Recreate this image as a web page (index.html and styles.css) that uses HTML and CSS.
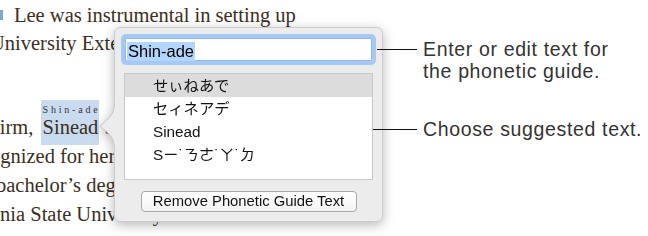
FILE: index.html
```html
<!DOCTYPE html>
<html>
<head>
<meta charset="utf-8">
<link rel="stylesheet" href="styles.css">
</head>
<body>
<div class="page">
  <div class="stage">
    <div class="doc">
      <div class="ln ln1"><span class="mark"></span>Lee was instrumental in setting up</div>
      <div class="ln ln2">University Extension</div>
      <div class="ln ln3">firm, <span class="hl"><span class="rt">Shin-ade</span>Sinead</span> Sheehan</div>
      <div class="ln ln4">recognized for her</div>
      <div class="ln ln5">bachelor’s degree</div>
      <div class="ln ln6">California State University at Chico.</div>
    </div>
    <div class="popover">
      <svg class="tail" width="16" height="38" viewBox="0 0 16 38">
        <path d="M16,0 L14,0 C14,9 5,14 0,19 C5,24 14,29 14,38 L16,38 Z" fill="#ececec"/>
        <path d="M14,0 C14,9 5,14 0,19 C5,24 14,29 14,38" fill="none" stroke="#c6c6c6" stroke-width="1"/>
      </svg>
      <div class="field"><span class="sel">Shin-ade</span></div>
      <div class="list">
        <div class="row on">せぃねあで</div>
        <div class="row">セィネアデ</div>
        <div class="row">Sinead</div>
        <div class="row">Sㄧ˙ㄋㄜ˙ㄚ˙ㄉ</div>
      </div>
      <div class="btnwrap"><div class="btn">Remove Phonetic Guide Text</div></div>
    </div>
  </div>
  <div class="callouts">
    <div class="co co1"><span class="line"></span><span class="txt">Enter or edit text for<br>the phonetic guide.</span></div>
    <div class="co co2"><span class="line"></span><span class="txt">Choose suggested text.</span></div>
  </div>
</div>
</body>
</html>
```
FILE: styles.css
```css
html, body {
  margin: 0;
  padding: 0;
  background: #ffffff;
}
.page {
  display: flex;
  width: 648px;
  height: 236px;
  overflow: hidden;
}
.stage {
  position: relative;
  width: 373px;
  flex: none;
}
.doc {
  font-family: "Liberation Serif", serif;
  font-size: 20.5px;
  line-height: 28px;
  color: #3b2f1e;
  padding-top: 1px;
  white-space: nowrap;
}
.mark {
  display: inline-block;
  width: 3px;
  height: 10px;
  background: #7aa6dc;
  margin-right: 11px;
  vertical-align: 2px;
}
.ln1 { margin-left: 0; }
.ln2 { margin-left: -10px; }
.ln3 { margin-left: -7px; margin-top: 56px; line-height: 29px; }
.ln4 { margin-left: -35px; line-height: 29px; }
.ln5 { margin-left: -4px; line-height: 29px; }
.ln6 { margin-left: -58px; line-height: 29px; }
.hl {
  position: relative;
  background: #c9dbee;
  margin-left: 2px;
  padding: 16px 1px 7px 2px;
}
.rt {
  position: absolute;
  left: 2px;
  top: 5px;
  font-size: 10px;
  line-height: 10px;
  letter-spacing: 2.8px;
  color: #3a3140;
}
.popover {
  position: absolute;
  left: 114px;
  top: 27px;
  width: 269px;
  height: 195px;
  box-sizing: border-box;
  background: #ececec;
  border: 1px solid #cdcdcd;
  border-radius: 6px;
  padding: 6px;
  display: flex;
  flex-direction: column;
  filter: drop-shadow(0 3px 6px rgba(0, 0, 0, 0.28));
  font-family: "Liberation Sans", "Noto Sans CJK JP", sans-serif;
  color: #111111;
}
.tail {
  position: absolute;
  left: -15px;
  top: 79px;
  display: block;
}
.field {
  height: 31px;
  box-sizing: border-box;
  border: 4px solid #a6c8f4;
  border-radius: 5px;
  background: #ffffff;
  box-shadow: inset 0 0 0 1px #93b9ec;
  display: flex;
  align-items: flex-end;
  padding-left: 2px;
}
.sel {
  display: inline-block;
  background: #b4d5fe;
  font-size: 16.5px;
  line-height: 19px;
  padding: 0 1px;
  color: #000;
}
.list {
  margin: 8px 3px 0;
  height: 107px;
  box-sizing: border-box;
  border: 1px solid #c9c9c9;
  background: #ffffff;
}
.row {
  height: 23px;
  box-sizing: border-box;
  padding-top: 1px;
  line-height: 22px;
  padding-left: 28px;
  font-size: 15.3px;
  white-space: nowrap;
}
.row.on {
  background: #dcdcdc;
}
.btnwrap {
  margin-top: 11px;
  display: flex;
  justify-content: center;
}
.btn {
  width: 216px;
  height: 21px;
  box-sizing: border-box;
  border: 1px solid #a9a9a9;
  border-radius: 4px;
  background: linear-gradient(#ffffff, #f3f3f3);
  font-size: 14.8px;
  line-height: 19px;
  text-align: center;
  color: #111;
  white-space: nowrap;
}
.callouts {
  position: relative;
  z-index: 1;
  padding-top: 38px;
  display: flex;
  flex-direction: column;
  gap: 36px;
  font-family: "Liberation Sans", sans-serif;
  font-size: 19.5px;
  line-height: 22px;
  letter-spacing: 0.65px;
  color: #333333;
  white-space: nowrap;
}
.co {
  display: flex;
  align-items: flex-start;
}
.co .line {
  flex: none;
  height: 1px;
  background: #111111;
  margin-top: 11px;
  margin-right: 6px;
}
.co1 .line {
  width: 40px;
  margin-left: 4px;
}
.co2 .line {
  width: 44px;
}
```
